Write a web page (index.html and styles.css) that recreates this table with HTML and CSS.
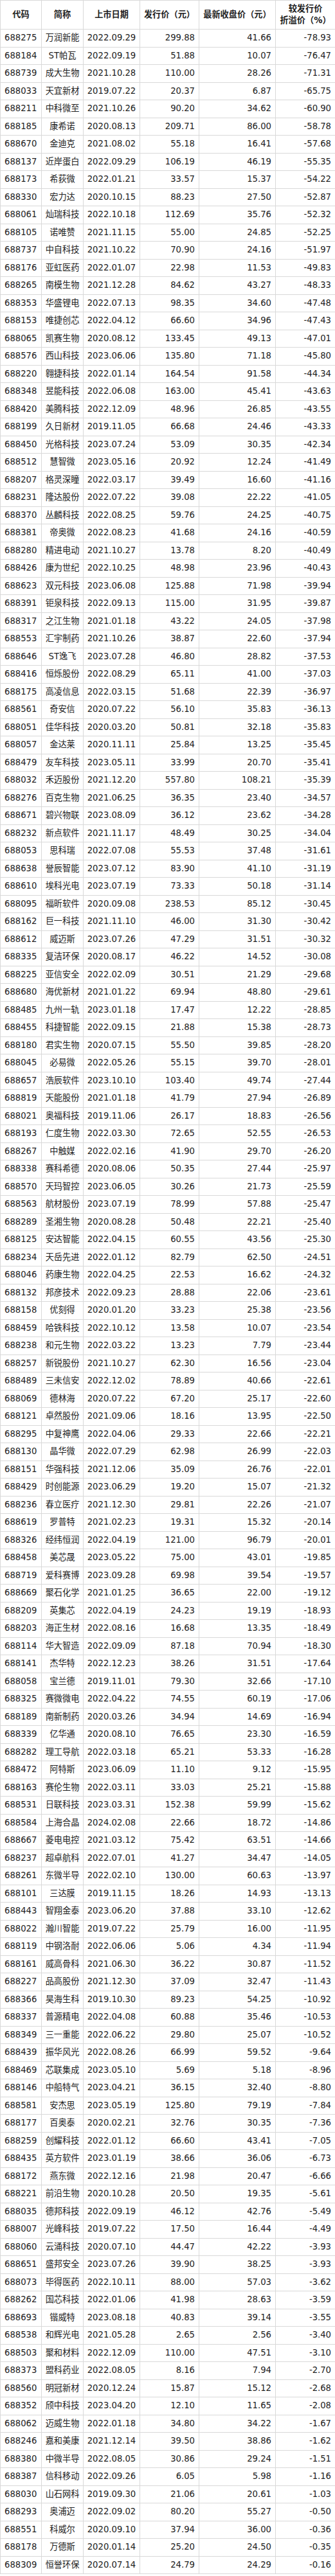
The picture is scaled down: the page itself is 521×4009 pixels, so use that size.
FILE: index.html
```html
<!DOCTYPE html>
<html lang="zh-CN">
<head>
<meta charset="utf-8">
<title>科创板破发股</title>
<link rel="stylesheet" href="styles.css">
</head>
<body>
<table class="ipo">
<colgroup>
<col class="c-code"><col class="c-name"><col class="c-date"><col class="c-issue"><col class="c-close"><col class="c-pct">
</colgroup>
<thead>
<tr><th>代码</th><th>简称</th><th>上市日期</th><th>发行价（元）</th><th>最新收盘价（元）</th><th>较发行价<br>折溢价（%）</th></tr>
</thead>
<tbody>
<tr><td>688275</td><td>万润新能</td><td>2022.09.29</td><td>299.88</td><td>41.66</td><td>-78.93</td></tr>
<tr><td>688184</td><td>ST帕瓦</td><td>2022.09.19</td><td>51.88</td><td>10.07</td><td>-76.47</td></tr>
<tr><td>688739</td><td>成大生物</td><td>2021.10.28</td><td>110.00</td><td>28.26</td><td>-71.31</td></tr>
<tr><td>688033</td><td>天宜新材</td><td>2019.07.22</td><td>20.37</td><td>6.87</td><td>-65.75</td></tr>
<tr><td>688211</td><td>中科微至</td><td>2021.10.26</td><td>90.20</td><td>34.62</td><td>-60.90</td></tr>
<tr><td>688185</td><td>康希诺</td><td>2020.08.13</td><td>209.71</td><td>86.00</td><td>-58.78</td></tr>
<tr><td>688670</td><td>金迪克</td><td>2021.08.02</td><td>55.18</td><td>16.41</td><td>-57.68</td></tr>
<tr><td>688137</td><td>近岸蛋白</td><td>2022.09.29</td><td>106.19</td><td>46.19</td><td>-55.35</td></tr>
<tr><td>688173</td><td>希荻微</td><td>2022.01.21</td><td>33.57</td><td>15.37</td><td>-54.22</td></tr>
<tr><td>688330</td><td>宏力达</td><td>2020.10.15</td><td>88.23</td><td>27.50</td><td>-52.87</td></tr>
<tr><td>688061</td><td>灿瑞科技</td><td>2022.10.18</td><td>112.69</td><td>35.76</td><td>-52.32</td></tr>
<tr><td>688105</td><td>诺唯赞</td><td>2021.11.15</td><td>55.00</td><td>24.85</td><td>-52.25</td></tr>
<tr><td>688737</td><td>中自科技</td><td>2021.10.22</td><td>70.90</td><td>24.16</td><td>-51.97</td></tr>
<tr><td>688176</td><td>亚虹医药</td><td>2022.01.07</td><td>22.98</td><td>11.53</td><td>-49.83</td></tr>
<tr><td>688265</td><td>南模生物</td><td>2021.12.28</td><td>84.62</td><td>43.27</td><td>-48.33</td></tr>
<tr><td>688353</td><td>华盛锂电</td><td>2022.07.13</td><td>98.35</td><td>34.60</td><td>-47.48</td></tr>
<tr><td>688153</td><td>唯捷创芯</td><td>2022.04.12</td><td>66.60</td><td>34.96</td><td>-47.43</td></tr>
<tr><td>688065</td><td>凯赛生物</td><td>2020.08.12</td><td>133.45</td><td>49.13</td><td>-47.01</td></tr>
<tr><td>688576</td><td>西山科技</td><td>2023.06.06</td><td>135.80</td><td>71.18</td><td>-45.80</td></tr>
<tr><td>688220</td><td>翱捷科技</td><td>2022.01.14</td><td>164.54</td><td>91.58</td><td>-44.34</td></tr>
<tr><td>688348</td><td>昱能科技</td><td>2022.06.08</td><td>163.00</td><td>45.41</td><td>-43.63</td></tr>
<tr><td>688420</td><td>美腾科技</td><td>2022.12.09</td><td>48.96</td><td>26.85</td><td>-43.55</td></tr>
<tr><td>688199</td><td>久日新材</td><td>2019.11.05</td><td>66.68</td><td>24.46</td><td>-43.33</td></tr>
<tr><td>688450</td><td>光格科技</td><td>2023.07.24</td><td>53.09</td><td>30.35</td><td>-42.34</td></tr>
<tr><td>688512</td><td>慧智微</td><td>2023.05.16</td><td>20.92</td><td>12.24</td><td>-41.49</td></tr>
<tr><td>688207</td><td>格灵深瞳</td><td>2022.03.17</td><td>39.49</td><td>16.60</td><td>-41.16</td></tr>
<tr><td>688231</td><td>隆达股份</td><td>2022.07.22</td><td>39.08</td><td>22.22</td><td>-41.05</td></tr>
<tr><td>688370</td><td>丛麟科技</td><td>2022.08.25</td><td>59.76</td><td>24.25</td><td>-40.75</td></tr>
<tr><td>688381</td><td>帝奥微</td><td>2022.08.23</td><td>41.68</td><td>24.16</td><td>-40.59</td></tr>
<tr><td>688280</td><td>精进电动</td><td>2021.10.27</td><td>13.78</td><td>8.20</td><td>-40.49</td></tr>
<tr><td>688426</td><td>康为世纪</td><td>2022.10.25</td><td>48.98</td><td>23.96</td><td>-40.43</td></tr>
<tr><td>688623</td><td>双元科技</td><td>2023.06.08</td><td>125.88</td><td>71.98</td><td>-39.94</td></tr>
<tr><td>688391</td><td>钜泉科技</td><td>2022.09.13</td><td>115.00</td><td>31.95</td><td>-39.87</td></tr>
<tr><td>688317</td><td>之江生物</td><td>2021.01.18</td><td>43.22</td><td>24.05</td><td>-37.98</td></tr>
<tr><td>688553</td><td>汇宇制药</td><td>2021.10.26</td><td>38.87</td><td>22.60</td><td>-37.94</td></tr>
<tr><td>688646</td><td>ST逸飞</td><td>2023.07.28</td><td>46.80</td><td>28.82</td><td>-37.53</td></tr>
<tr><td>688416</td><td>恒烁股份</td><td>2022.08.29</td><td>65.11</td><td>41.00</td><td>-37.03</td></tr>
<tr><td>688175</td><td>高凌信息</td><td>2022.03.15</td><td>51.68</td><td>22.39</td><td>-36.97</td></tr>
<tr><td>688561</td><td>奇安信</td><td>2020.07.22</td><td>56.10</td><td>35.83</td><td>-36.13</td></tr>
<tr><td>688051</td><td>佳华科技</td><td>2020.03.20</td><td>50.81</td><td>32.18</td><td>-35.83</td></tr>
<tr><td>688057</td><td>金达莱</td><td>2020.11.11</td><td>25.84</td><td>13.25</td><td>-35.45</td></tr>
<tr><td>688479</td><td>友车科技</td><td>2023.05.11</td><td>33.99</td><td>20.70</td><td>-35.41</td></tr>
<tr><td>688032</td><td>禾迈股份</td><td>2021.12.20</td><td>557.80</td><td>108.21</td><td>-35.39</td></tr>
<tr><td>688276</td><td>百克生物</td><td>2021.06.25</td><td>36.35</td><td>23.40</td><td>-34.57</td></tr>
<tr><td>688671</td><td>碧兴物联</td><td>2023.08.09</td><td>36.12</td><td>23.62</td><td>-34.28</td></tr>
<tr><td>688232</td><td>新点软件</td><td>2021.11.17</td><td>48.49</td><td>30.25</td><td>-34.04</td></tr>
<tr><td>688053</td><td>思科瑞</td><td>2022.07.08</td><td>55.53</td><td>37.48</td><td>-31.61</td></tr>
<tr><td>688638</td><td>誉辰智能</td><td>2023.07.12</td><td>83.90</td><td>41.10</td><td>-31.19</td></tr>
<tr><td>688610</td><td>埃科光电</td><td>2023.07.19</td><td>73.33</td><td>50.18</td><td>-31.14</td></tr>
<tr><td>688095</td><td>福昕软件</td><td>2020.09.08</td><td>238.53</td><td>85.12</td><td>-30.45</td></tr>
<tr><td>688162</td><td>巨一科技</td><td>2021.11.10</td><td>46.00</td><td>31.30</td><td>-30.42</td></tr>
<tr><td>688612</td><td>威迈斯</td><td>2023.07.26</td><td>47.29</td><td>31.51</td><td>-30.32</td></tr>
<tr><td>688335</td><td>复洁环保</td><td>2020.08.17</td><td>46.22</td><td>14.52</td><td>-30.08</td></tr>
<tr><td>688225</td><td>亚信安全</td><td>2022.02.09</td><td>30.51</td><td>21.29</td><td>-29.68</td></tr>
<tr><td>688680</td><td>海优新材</td><td>2021.01.22</td><td>69.94</td><td>48.80</td><td>-29.61</td></tr>
<tr><td>688485</td><td>九州一轨</td><td>2023.01.18</td><td>17.47</td><td>12.22</td><td>-28.85</td></tr>
<tr><td>688455</td><td>科捷智能</td><td>2022.09.15</td><td>21.88</td><td>15.38</td><td>-28.73</td></tr>
<tr><td>688180</td><td>君实生物</td><td>2020.07.15</td><td>55.50</td><td>39.85</td><td>-28.20</td></tr>
<tr><td>688045</td><td>必易微</td><td>2022.05.26</td><td>55.15</td><td>39.70</td><td>-28.01</td></tr>
<tr><td>688657</td><td>浩辰软件</td><td>2023.10.10</td><td>103.40</td><td>49.74</td><td>-27.44</td></tr>
<tr><td>688819</td><td>天能股份</td><td>2021.01.18</td><td>41.79</td><td>27.94</td><td>-26.89</td></tr>
<tr><td>688021</td><td>奥福科技</td><td>2019.11.06</td><td>26.17</td><td>18.83</td><td>-26.56</td></tr>
<tr><td>688193</td><td>仁度生物</td><td>2022.03.30</td><td>72.65</td><td>52.55</td><td>-26.53</td></tr>
<tr><td>688267</td><td>中触媒</td><td>2022.02.16</td><td>41.90</td><td>29.70</td><td>-26.20</td></tr>
<tr><td>688338</td><td>赛科希德</td><td>2020.08.06</td><td>50.35</td><td>27.44</td><td>-25.97</td></tr>
<tr><td>688570</td><td>天玛智控</td><td>2023.06.05</td><td>30.26</td><td>21.73</td><td>-25.59</td></tr>
<tr><td>688563</td><td>航材股份</td><td>2023.07.19</td><td>78.99</td><td>57.88</td><td>-25.47</td></tr>
<tr><td>688289</td><td>圣湘生物</td><td>2020.08.28</td><td>50.48</td><td>22.21</td><td>-25.40</td></tr>
<tr><td>688125</td><td>安达智能</td><td>2022.04.15</td><td>60.55</td><td>43.56</td><td>-25.30</td></tr>
<tr><td>688234</td><td>天岳先进</td><td>2022.01.12</td><td>82.79</td><td>62.50</td><td>-24.51</td></tr>
<tr><td>688046</td><td>药康生物</td><td>2022.04.25</td><td>22.53</td><td>16.62</td><td>-24.32</td></tr>
<tr><td>688132</td><td>邦彦技术</td><td>2022.09.23</td><td>28.88</td><td>22.06</td><td>-23.61</td></tr>
<tr><td>688158</td><td>优刻得</td><td>2020.01.20</td><td>33.23</td><td>25.38</td><td>-23.56</td></tr>
<tr><td>688459</td><td>哈铁科技</td><td>2022.10.12</td><td>13.58</td><td>10.07</td><td>-23.54</td></tr>
<tr><td>688238</td><td>和元生物</td><td>2022.03.22</td><td>13.23</td><td>7.79</td><td>-23.44</td></tr>
<tr><td>688257</td><td>新锐股份</td><td>2021.10.27</td><td>62.30</td><td>16.56</td><td>-23.04</td></tr>
<tr><td>688489</td><td>三未信安</td><td>2022.12.02</td><td>78.89</td><td>40.66</td><td>-22.61</td></tr>
<tr><td>688069</td><td>德林海</td><td>2020.07.22</td><td>67.20</td><td>25.17</td><td>-22.60</td></tr>
<tr><td>688121</td><td>卓然股份</td><td>2021.09.06</td><td>18.16</td><td>13.95</td><td>-22.50</td></tr>
<tr><td>688295</td><td>中复神鹰</td><td>2022.04.06</td><td>29.33</td><td>22.66</td><td>-22.21</td></tr>
<tr><td>688130</td><td>晶华微</td><td>2022.07.29</td><td>62.98</td><td>26.99</td><td>-22.03</td></tr>
<tr><td>688151</td><td>华强科技</td><td>2021.12.06</td><td>35.09</td><td>26.76</td><td>-22.01</td></tr>
<tr><td>688429</td><td>时创能源</td><td>2023.06.29</td><td>19.20</td><td>15.07</td><td>-21.32</td></tr>
<tr><td>688236</td><td>春立医疗</td><td>2021.12.30</td><td>29.81</td><td>22.26</td><td>-21.07</td></tr>
<tr><td>688619</td><td>罗普特</td><td>2021.02.23</td><td>19.31</td><td>15.32</td><td>-20.14</td></tr>
<tr><td>688326</td><td>经纬恒润</td><td>2022.04.19</td><td>121.00</td><td>96.79</td><td>-20.01</td></tr>
<tr><td>688458</td><td>美芯晟</td><td>2023.05.22</td><td>75.00</td><td>43.01</td><td>-19.85</td></tr>
<tr><td>688719</td><td>爱科赛博</td><td>2023.09.28</td><td>69.98</td><td>39.54</td><td>-19.57</td></tr>
<tr><td>688669</td><td>聚石化学</td><td>2021.01.25</td><td>36.65</td><td>22.00</td><td>-19.12</td></tr>
<tr><td>688209</td><td>英集芯</td><td>2022.04.19</td><td>24.23</td><td>19.19</td><td>-18.93</td></tr>
<tr><td>688203</td><td>海正生材</td><td>2022.08.16</td><td>16.68</td><td>13.35</td><td>-18.49</td></tr>
<tr><td>688114</td><td>华大智造</td><td>2022.09.09</td><td>87.18</td><td>70.94</td><td>-18.30</td></tr>
<tr><td>688141</td><td>杰华特</td><td>2022.12.23</td><td>38.26</td><td>31.51</td><td>-17.64</td></tr>
<tr><td>688058</td><td>宝兰德</td><td>2019.11.01</td><td>79.30</td><td>32.66</td><td>-17.10</td></tr>
<tr><td>688325</td><td>赛微微电</td><td>2022.04.22</td><td>74.55</td><td>60.19</td><td>-17.06</td></tr>
<tr><td>688189</td><td>南新制药</td><td>2020.03.26</td><td>34.94</td><td>14.69</td><td>-16.94</td></tr>
<tr><td>688339</td><td>亿华通</td><td>2020.08.10</td><td>76.65</td><td>23.30</td><td>-16.59</td></tr>
<tr><td>688282</td><td>理工导航</td><td>2022.03.18</td><td>65.21</td><td>53.33</td><td>-16.28</td></tr>
<tr><td>688472</td><td>阿特斯</td><td>2023.06.09</td><td>11.10</td><td>9.12</td><td>-15.95</td></tr>
<tr><td>688163</td><td>赛伦生物</td><td>2022.03.11</td><td>33.03</td><td>25.21</td><td>-15.88</td></tr>
<tr><td>688531</td><td>日联科技</td><td>2023.03.31</td><td>152.38</td><td>59.99</td><td>-15.62</td></tr>
<tr><td>688584</td><td>上海合晶</td><td>2024.02.08</td><td>22.66</td><td>18.72</td><td>-14.86</td></tr>
<tr><td>688667</td><td>菱电电控</td><td>2021.03.12</td><td>75.42</td><td>63.51</td><td>-14.66</td></tr>
<tr><td>688237</td><td>超卓航科</td><td>2022.07.01</td><td>41.27</td><td>34.47</td><td>-14.05</td></tr>
<tr><td>688261</td><td>东微半导</td><td>2022.02.10</td><td>130.00</td><td>60.63</td><td>-13.97</td></tr>
<tr><td>688101</td><td>三达膜</td><td>2019.11.15</td><td>18.26</td><td>14.93</td><td>-13.13</td></tr>
<tr><td>688443</td><td>智翔金泰</td><td>2023.06.20</td><td>37.88</td><td>33.10</td><td>-12.62</td></tr>
<tr><td>688022</td><td>瀚川智能</td><td>2019.07.22</td><td>25.79</td><td>16.00</td><td>-11.95</td></tr>
<tr><td>688119</td><td>中钢洛耐</td><td>2022.06.06</td><td>5.06</td><td>4.34</td><td>-11.94</td></tr>
<tr><td>688161</td><td>威高骨科</td><td>2021.06.30</td><td>36.22</td><td>30.87</td><td>-11.52</td></tr>
<tr><td>688227</td><td>品高股份</td><td>2021.12.30</td><td>37.09</td><td>32.47</td><td>-11.43</td></tr>
<tr><td>688366</td><td>昊海生科</td><td>2019.10.30</td><td>89.23</td><td>54.25</td><td>-10.92</td></tr>
<tr><td>688337</td><td>普源精电</td><td>2022.04.08</td><td>60.88</td><td>35.46</td><td>-10.53</td></tr>
<tr><td>688349</td><td>三一重能</td><td>2022.06.22</td><td>29.80</td><td>25.07</td><td>-10.52</td></tr>
<tr><td>688439</td><td>振华风光</td><td>2022.08.26</td><td>66.99</td><td>59.52</td><td>-9.64</td></tr>
<tr><td>688469</td><td>芯联集成</td><td>2023.05.10</td><td>5.69</td><td>5.18</td><td>-8.96</td></tr>
<tr><td>688146</td><td>中船特气</td><td>2023.04.21</td><td>36.15</td><td>32.40</td><td>-8.80</td></tr>
<tr><td>688581</td><td>安杰思</td><td>2023.05.19</td><td>125.80</td><td>79.19</td><td>-7.84</td></tr>
<tr><td>688177</td><td>百奥泰</td><td>2020.02.21</td><td>32.76</td><td>30.35</td><td>-7.36</td></tr>
<tr><td>688259</td><td>创耀科技</td><td>2022.01.12</td><td>66.60</td><td>43.41</td><td>-7.05</td></tr>
<tr><td>688435</td><td>英方软件</td><td>2023.01.19</td><td>38.66</td><td>36.06</td><td>-6.73</td></tr>
<tr><td>688172</td><td>燕东微</td><td>2022.12.16</td><td>21.98</td><td>20.47</td><td>-6.66</td></tr>
<tr><td>688221</td><td>前沿生物</td><td>2020.10.28</td><td>20.50</td><td>19.35</td><td>-5.61</td></tr>
<tr><td>688035</td><td>德邦科技</td><td>2022.09.19</td><td>46.12</td><td>42.76</td><td>-5.49</td></tr>
<tr><td>688007</td><td>光峰科技</td><td>2019.07.22</td><td>17.50</td><td>16.44</td><td>-4.49</td></tr>
<tr><td>688060</td><td>云涌科技</td><td>2020.07.10</td><td>44.47</td><td>42.22</td><td>-3.93</td></tr>
<tr><td>688651</td><td>盛邦安全</td><td>2023.07.26</td><td>39.90</td><td>38.25</td><td>-3.93</td></tr>
<tr><td>688073</td><td>毕得医药</td><td>2022.10.11</td><td>88.00</td><td>57.03</td><td>-3.62</td></tr>
<tr><td>688262</td><td>国芯科技</td><td>2022.01.06</td><td>41.98</td><td>28.63</td><td>-3.59</td></tr>
<tr><td>688693</td><td>锴威特</td><td>2023.08.18</td><td>40.83</td><td>39.14</td><td>-3.55</td></tr>
<tr><td>688538</td><td>和辉光电</td><td>2021.05.28</td><td>2.65</td><td>2.56</td><td>-3.40</td></tr>
<tr><td>688503</td><td>聚和材料</td><td>2022.12.09</td><td>110.00</td><td>47.51</td><td>-3.10</td></tr>
<tr><td>688373</td><td>盟科药业</td><td>2022.08.05</td><td>8.16</td><td>7.94</td><td>-2.70</td></tr>
<tr><td>688560</td><td>明冠新材</td><td>2020.12.24</td><td>15.87</td><td>15.12</td><td>-2.68</td></tr>
<tr><td>688352</td><td>颀中科技</td><td>2023.04.20</td><td>12.10</td><td>11.65</td><td>-2.08</td></tr>
<tr><td>688062</td><td>迈威生物</td><td>2022.01.18</td><td>34.80</td><td>34.22</td><td>-1.67</td></tr>
<tr><td>688246</td><td>嘉和美康</td><td>2021.12.14</td><td>39.50</td><td>38.86</td><td>-1.62</td></tr>
<tr><td>688380</td><td>中微半导</td><td>2022.08.05</td><td>30.86</td><td>29.24</td><td>-1.51</td></tr>
<tr><td>688387</td><td>信科移动</td><td>2022.09.26</td><td>6.05</td><td>5.98</td><td>-1.16</td></tr>
<tr><td>688030</td><td>山石网科</td><td>2019.09.30</td><td>21.06</td><td>20.61</td><td>-1.03</td></tr>
<tr><td>688293</td><td>奥浦迈</td><td>2022.09.02</td><td>80.20</td><td>55.27</td><td>-0.50</td></tr>
<tr><td>688551</td><td>科威尔</td><td>2020.09.10</td><td>37.94</td><td>36.00</td><td>-0.36</td></tr>
<tr><td>688178</td><td>万德斯</td><td>2020.01.14</td><td>25.20</td><td>24.50</td><td>-0.35</td></tr>
<tr><td>688309</td><td>恒誉环保</td><td>2020.07.14</td><td>24.79</td><td>24.29</td><td>-0.16</td></tr>
</tbody>
</table>
</body>
</html>
```

FILE: styles.css
```css
html, body {
  margin: 0;
  padding: 0;
  background: #ffffff;
}

body {
  font-family: "DejaVu Sans", "Noto Sans CJK SC", sans-serif;
  font-size: 13.2px;
  color: #222222;
}

.ipo {
  border-collapse: collapse;
  table-layout: fixed;
  width: 521px;
}

.c-code { width: 64px; }
.c-name { width: 65px; }
.c-date { width: 88px; }
.c-issue { width: 92px; }
.c-close { width: 119px; }
.c-pct { width: 93px; }

.ipo th,
.ipo td {
  border: 1px solid #d9d9d9;
  padding: 0 6px;
  white-space: nowrap;
  overflow: hidden;
}

.ipo thead tr {
  height: 45px;
}

.ipo th {
  font-weight: bold;
  text-align: center;
  line-height: 17.7px;
  padding: 0 2px;
}

.ipo tbody tr {
  height: 27.5px;
}

.ipo td {
  line-height: 16px;
  text-align: right;
}

.ipo td:nth-child(1) {
  text-align: left;
  padding-left: 6px;
}

.ipo td:nth-child(2) {
  text-align: center;
  padding: 0;
}

.ipo td:nth-child(3) {
  text-align: center;
  padding: 0;
}
```
